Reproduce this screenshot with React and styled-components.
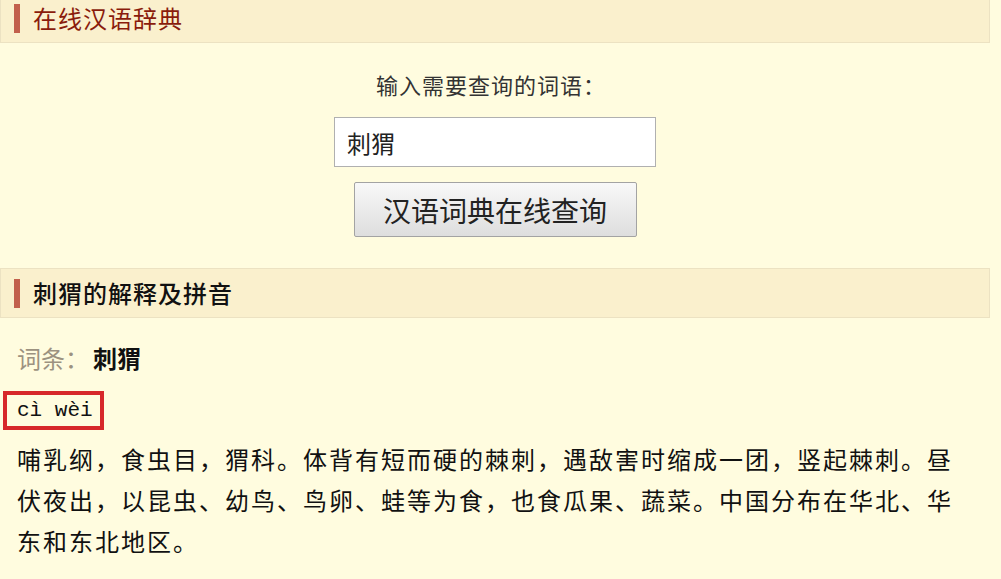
import React from 'react';
import styled, { createGlobalStyle } from 'styled-components';

const GlobalStyle = createGlobalStyle`
  html, body {
    margin: 0;
    padding: 0;
    background: #fffcdf;
    overflow: hidden;
  }
  body {
    font-family: "Noto Sans CJK SC", "Noto Sans", sans-serif;
    color: #111;
  }
`;

const Page = styled.div`
  width: 990px;
`;

const SectionHeader = styled.div`
  display: flex;
  align-items: center;
  gap: 13px;
  height: 48px;
  padding-left: 13px;
  margin-top: ${p => p.$top || 0}px;
  background: #faf0cd;
  border: 1px solid #ece2c2;
  box-sizing: content-box;
`;

const Accent = styled.span`
  width: 6px;
  height: 29px;
  background: #c2604c;
`;

const HeaderTitle = styled.h2`
  margin: 0;
  font-size: 24px;
  line-height: 30px;
  letter-spacing: 1px;
  font-weight: ${p => (p.$dark ? 500 : 400)};
  color: ${p => (p.$dark ? '#111' : '#8a1c0c')};
`;

const SearchForm = styled.form`
  display: flex;
  flex-direction: column;
  align-items: center;
  padding: 26px 0 31px;
`;

const Prompt = styled.label`
  font-size: 22px;
  line-height: 30px;
  letter-spacing: 1px;
  color: #333;
  margin-left: -8px;
`;

const WordInput = styled.input`
  box-sizing: border-box;
  width: 322px;
  height: 50px;
  margin-top: 18px;
  padding: 0 12px;
  border: 1px solid #b0b0b0;
  background: #fff;
  font-family: inherit;
  font-size: 24px;
  color: #222;
  outline: none;
`;

const SearchButton = styled.button`
  box-sizing: border-box;
  width: 283px;
  height: 55px;
  margin-top: 15px;
  border: 1px solid #a3a3a3;
  border-radius: 2px;
  background: linear-gradient(#f8f8f8, #dedede);
  font-family: inherit;
  font-size: 28px;
  color: #222;
  cursor: pointer;
`;

const Result = styled.div`
  padding: 25px 17px 0;
`;

const Entry = styled.div`
  font-size: 24px;
  line-height: 30px;
  color: #111;
`;

const EntryLabel = styled.span`
  color: #9c9280;
  margin-right: 4px;
`;

const EntryWord = styled.strong`
  font-weight: 700;
`;

const Pinyin = styled.div`
  display: inline-block;
  box-sizing: border-box;
  height: 39px;
  margin: 18px 0 0 -14px;
  padding: 0 7px 0 10px;
  border: 4px solid #d7282a;
  font-family: "Liberation Mono", "DejaVu Sans Mono", monospace;
  font-size: 21px;
  line-height: 31px;
  color: #111;
`;

const Definition = styled.p`
  margin: 8px 0 0;
  font-size: 24px;
  line-height: 41px;
  letter-spacing: 2px;
  color: #111;
`;

export default function App() {
  const [word, setWord] = React.useState('刺猬');

  return (
    <Page>
      <GlobalStyle />
      <SectionHeader $top={-7}>
        <Accent />
        <HeaderTitle>在线汉语辞典</HeaderTitle>
      </SectionHeader>
      <SearchForm onSubmit={e => e.preventDefault()}>
        <Prompt>输入需要查询的词语：</Prompt>
        <WordInput value={word} onChange={e => setWord(e.target.value)} />
        <SearchButton type="submit">汉语词典在线查询</SearchButton>
      </SearchForm>
      <SectionHeader>
        <Accent />
        <HeaderTitle $dark>刺猬的解释及拼音</HeaderTitle>
      </SectionHeader>
      <Result>
        <Entry>
          <EntryLabel>词条：</EntryLabel>
          <EntryWord>刺猬</EntryWord>
        </Entry>
        <Pinyin>cì wèi</Pinyin>
        <Definition>
          哺乳纲，食虫目，猬科。体背有短而硬的棘刺，遇敌害时缩成一团，竖起棘刺。昼伏夜出，以昆虫、幼鸟、鸟卵、蛙等为食，也食瓜果、蔬菜。中国分布在华北、华东和东北地区。
        </Definition>
      </Result>
    </Page>
  );
}
